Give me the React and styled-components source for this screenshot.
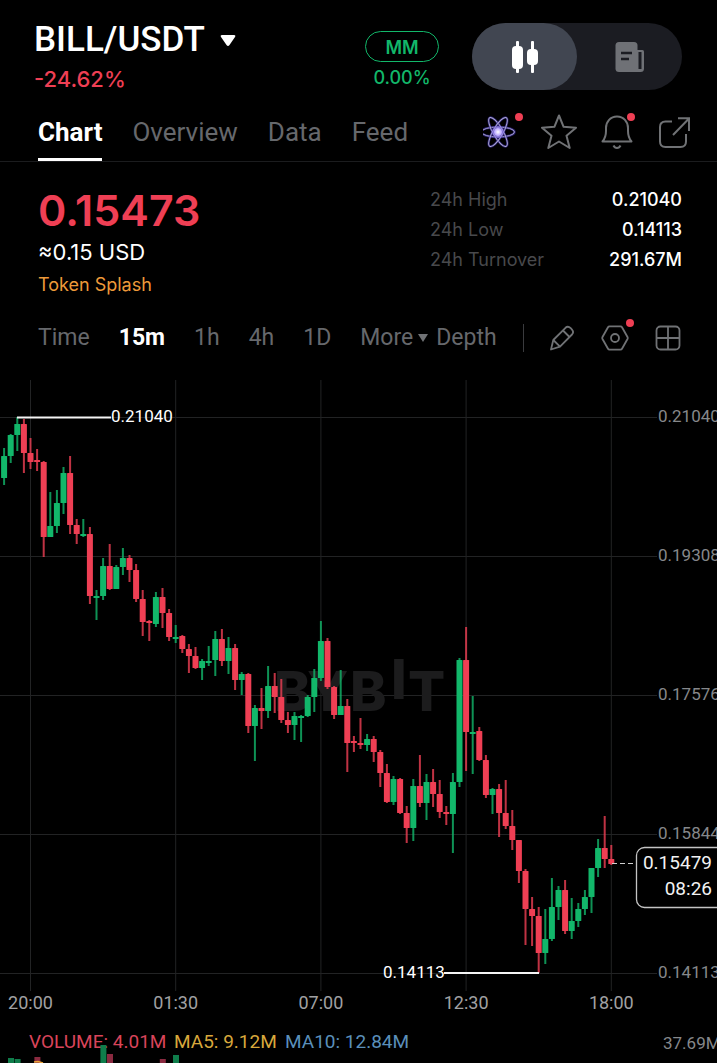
import React, { useState } from 'react'
import styled, { createGlobalStyle } from 'styled-components'

const GREEN = '#12b76a'
const RED = '#ef3f54'
const GREY = '#66686c'

// one entry per 15m candle: side, high, body top, body bottom, low (chart units)
const CANDLES = [
    ['g', 448, 456, 478, 485], ['g', 434, 435, 456, 463], ['g', 417, 424, 435, 451], ['r', 419, 424, 453, 473],
    ['r', 438, 453, 462, 469], ['r', 449, 460, 462, 471], ['r', 461, 462, 537, 557], ['g', 492, 526, 537, 537],
    ['g', 490, 503, 526, 533], ['g', 467, 473, 503, 514], ['r', 456, 473, 525, 534], ['r', 519, 525, 534, 544],
    ['g', 519, 534, 536, 537], ['r', 527, 534, 596, 604], ['g', 590, 596, 598, 620], ['g', 558, 566, 596, 600],
    ['r', 544, 566, 589, 590], ['g', 565, 567, 589, 589], ['g', 548, 558, 567, 575], ['r', 555, 558, 570, 582],
    ['r', 564, 570, 599, 602], ['r', 590, 599, 622, 636], ['r', 620, 621, 623, 641], ['g', 592, 597, 624, 627],
    ['r', 588, 597, 613, 628], ['r', 609, 613, 637, 641], ['g', 625, 637, 639, 643], ['r', 635, 636, 649, 653],
    ['r', 644, 649, 656, 673], ['r', 647, 656, 668, 669], ['g', 659, 661, 668, 680], ['g', 646, 661, 663, 666],
    ['g', 631, 639, 660, 676], ['r', 629, 639, 661, 666], ['g', 637, 648, 661, 674], ['r', 644, 648, 680, 690],
    ['g', 672, 674, 680, 695], ['r', 673, 674, 726, 733], ['g', 705, 708, 726, 761], ['r', 688, 708, 711, 729],
    ['g', 666, 686, 711, 718], ['r', 673, 686, 697, 713], ['r', 679, 697, 720, 723], ['r', 712, 720, 725, 733],
    ['g', 712, 716, 725, 740], ['g', 715, 716, 718, 742], ['g', 695, 697, 716, 717], ['g', 669, 678, 697, 712],
    ['g', 621, 641, 678, 681], ['r', 638, 641, 687, 689], ['r', 686, 687, 715, 719], ['g', 670, 706, 715, 715],
    ['r', 699, 706, 743, 772], ['r', 736, 741, 743, 752], ['r', 718, 743, 745, 749], ['g', 734, 739, 745, 751],
    ['r', 736, 739, 752, 762], ['r', 750, 752, 773, 787], ['r', 764, 773, 802, 803], ['g', 776, 779, 802, 805],
    ['r', 778, 779, 813, 814], ['r', 806, 813, 828, 843], ['g', 779, 786, 828, 841], ['r', 755, 786, 803, 807],
    ['g', 774, 782, 803, 820], ['r', 769, 782, 794, 807], ['r', 780, 794, 812, 818], ['r', 806, 812, 814, 825],
    ['g', 773, 782, 814, 853], ['g', 658, 660, 782, 787], ['r', 627, 660, 732, 771], ['g', 696, 732, 734, 774],
    ['r', 727, 731, 760, 761], ['r', 755, 760, 795, 798], ['g', 788, 789, 795, 814], ['r', 784, 789, 813, 837],
    ['r', 780, 813, 826, 829], ['r', 810, 826, 840, 850], ['r', 840, 840, 871, 883], ['r', 869, 871, 909, 945],
    ['r', 897, 909, 916, 946], ['r', 907, 916, 953, 973], ['g', 909, 939, 953, 964], ['g', 878, 907, 939, 941],
    ['g', 886, 890, 907, 920], ['r', 880, 890, 931, 934], ['g', 898, 921, 931, 939], ['g', 903, 909, 921, 927],
    ['g', 890, 897, 909, 915], ['g', 868, 868, 897, 913], ['g', 839, 848, 868, 877], ['r', 816, 848, 859, 868],
    ['r', 845, 859, 864, 865],
]

const PRICES = [[417, '0.21040'], [556, '0.19308'], [695, '0.17576'], [834, '0.15844'], [973, '0.14113']]
const TIMES = [[30.5, '20:00'], [175.7, '01:30'], [320.9, '07:00'], [466.1, '12:30'], [611.3, '18:00']]
const VOLUMES = [[8, 1058, 'g'], [14.6, 1059, 'g'], [34.4, 1057, 'r'], [100.4, 1045, 'g'], [107, 1054, 'r'], [159.8, 1059, 'r'], [173, 1055, 'g']]

const STATS = [['24h High', '0.21040'], ['24h Low', '0.14113'], ['24h Turnover', '291.67M']]

const candleX = (i) => 4.1 + i * 6.6

const PriceChart = () => (
    <ChartSvg viewBox="0 377 717 686" role="img" aria-label="BILL/USDT 15m chart">
        <g stroke="#222324" strokeWidth="1">
            {PRICES.map(([y]) => <line key={y} x1="0" x2="657" y1={y + 0.5} y2={y + 0.5} />)}
            {TIMES.map(([x]) => <line key={x} x1={x} x2={x} y1="380" y2="991" />)}
        </g>

        <text fontFamily="Inter, sans-serif" fontWeight="800" fontSize="55" fill="#1c1c1d">
            <tspan x="274" y="711">B</tspan>
            <tspan x="307" y="711">Y</tspan>
            <tspan x="350" y="711">B</tspan>
            <tspan x="391" y="699">I</tspan>
            <tspan x="408" y="711">T</tspan>
        </text>

        {CANDLES.map(([side, high, top, bottom, low], i) => (
            <g key={i} fill={side === 'g' ? GREEN : RED}>
                <rect x={candleX(i) - 1} y={high} width="2" height={low - high} opacity="0.8" />
                <rect x={candleX(i) - 3} y={top} width="6" height={bottom - top} rx="0.6" />
            </g>
        ))}

        <g stroke="#f4f4f4" fill="none">
            <path d="M17 417.5H111M444 973H539" strokeWidth="2" />
            <path d="M612 863.5H636" strokeDasharray="5 3" strokeWidth="1.2" stroke="#cfcfcf" />
        </g>
        <g fontFamily="Roboto, sans-serif" fontSize="17">
            <g fill="#fff">
                <text x="111" y="422">0.21040</text>
                <text x="383" y="978">0.14113</text>
            </g>
            <g fill="#86888b">
                {PRICES.map(([y, label]) => <text key={y} x="658" y={y + 5}>{label}</text>)}
                <text x="663" y="1049">37.69M</text>
            </g>
        </g>
        <g fontFamily="Roboto, sans-serif" fontSize="18" fill="#a0a1a3" textAnchor="middle">
            {TIMES.map(([x, label]) => <text key={x} x={x} y="1009">{label}</text>)}
        </g>

        <rect x="636.5" y="847.5" width="100" height="60" rx="8" fill="#000" stroke="#c4c4c4" strokeWidth="1.3" />
        <g fontFamily="Roboto, sans-serif" fontSize="19" fill="#f2f2f2" textAnchor="end">
            <text x="712" y="869">0.15479</text>
            <text x="712" y="895">08:26</text>
        </g>

        <g fontFamily="Roboto, sans-serif" fontSize="19">
            <text x="29" y="1048" fill="#d9445a">VOLUME: 4.01M</text>
            <text x="174" y="1048" fill="#d8a83c">MA5: 9.12M</text>
            <text x="285" y="1048" fill="#5a8fba">MA10: 12.84M</text>
        </g>
        {VOLUMES.map(([x, y, side]) => (
            <rect key={x} x={x} y={y} width="6" height={1063 - y} fill={side === 'g' ? '#0f7d4b' : '#8a2a40'} />
        ))}
        <path d="M34 1062L38 1061.5L43 1063" stroke="#e8a33a" strokeWidth="1.6" fill="none" />
    </ChartSvg>
)

const AtomIcon = () => (
    <svg width="36" height="36" viewBox="0 0 36 36" fill="none">
        <defs>
            <radialGradient id="core">
                <stop offset="0" stopColor="#fff" />
                <stop offset="0.5" stopColor="#b9a8ff" />
                <stop offset="1" stopColor="#5b45d6" stopOpacity="0" />
            </radialGradient>
        </defs>
        {[0, 60, 120].map((deg) => (
            <g key={deg} transform={`rotate(${deg} 15 18)`}>
                <ellipse cx="15" cy="18" rx="16.5" ry="5" stroke="#3d2fa8" strokeWidth="2.4" opacity="0.7" />
                <ellipse cx="15" cy="18" rx="16.5" ry="5" stroke="#b4b0cf" strokeWidth="0.9" />
            </g>
        ))}
        <circle cx="15" cy="18" r="7" fill="url(#core)" />
    </svg>
)

const StarIcon = () => (
    <svg width="36" height="36" viewBox="0 0 36 36" fill="none" stroke="#707275" strokeWidth="2" strokeLinejoin="round">
        <path d="M18 1.5L22.6 12.8L35 13.7L25.5 21.7L28.7 34L18 27.5L7.3 34L10.5 21.7L1 13.7L13.4 12.8Z" />
    </svg>
)

const BellIcon = () => (
    <svg width="36" height="36" viewBox="0 0 36 36" fill="none" stroke="#707275" strokeWidth="2" strokeLinejoin="round">
        <path d="M3.5 27.5C6 24.5 7 21.5 7 17V14C7 7.5 11.5 2.5 18 2.5S29 7.5 29 14V17C29 21.5 30 24.5 32.5 27.5Z" />
        <path d="M14.5 31.5C16 34.8 20 34.8 21.5 31.5" />
    </svg>
)

const ShareIcon = () => (
    <svg width="36" height="36" viewBox="0 0 36 36" fill="none" stroke="#707275" strokeWidth="2">
        <path d="M15 7.5H8.5Q3 7.5 3 13V27.5Q3 33 8.5 33H23.5Q29 33 29 27.5V20" />
        <path d="M16 21L32 4.5M21 4.3H32V17" />
    </svg>
)

const PencilIcon = () => (
    <svg width="28" height="28" viewBox="0 0 28 28" fill="none" stroke="#707275" strokeWidth="1.8" strokeLinejoin="round">
        <path d="M3 25.5L5.3 16L17.5 3.8Q20 1.6 22.7 4.2L23.8 5.3Q26.3 8 24 10.5L12 22.7Z" />
        <path d="M15 6.5L21.5 13M5.3 16L12 22.7" />
    </svg>
)

const SettingIcon = () => (
    <svg width="28" height="28" viewBox="0 0 28 28" fill="none" stroke="#707275" strokeWidth="1.8" strokeLinejoin="round">
        <path d="M8.5 2.3H19.5Q20.5 2.3 21 3.2L26.5 13Q27 14 26.5 15L21 24.8Q20.5 25.7 19.5 25.7H8.5Q7.5 25.7 7 24.8L1.5 15Q1 14 1.5 13L7 3.2Q7.5 2.3 8.5 2.3Z" />
        <circle cx="14" cy="14" r="4" />
    </svg>
)

const LayoutIcon = () => (
    <svg width="28" height="28" viewBox="0 0 28 28" fill="none" stroke="#707275" strokeWidth="1.8">
        <rect x="2.5" y="2.5" width="23" height="23" rx="4" />
        <path d="M14 2.5V25.5M2.5 14H25.5" />
    </svg>
)

const App = () => {
    const [tab, setTab] = useState('Chart')
    const [interval, setChartInterval] = useState('15m')

    return (
        <Page>
            <GlobalStyle />
            <Header>
                <div>
                    <PairButton>
                        BILL/USDT
                        <svg width="16" height="13" viewBox="0 0 16 13"><path d="M2 1H14Q16 1 15 3L9.5 11Q8 13 6.5 11L1 3Q0 1 2 1Z" fill="#fff" /></svg>
                    </PairButton>
                    <Change>-24.62%</Change>
                </div>
                <HeaderRight>
                    <Maker>
                        <MakerTag>MM</MakerTag>
                        <span>0.00%</span>
                    </Maker>
                    <Switcher>
                        <SwitchButton $active aria-label="Chart view">
                            <svg width="28" height="34" viewBox="0 0 28 34" fill="#fff">
                                <rect x="5" y="1" width="3" height="32" rx="1" />
                                <rect x="1" y="6" width="11" height="23" rx="4" />
                                <rect x="20" y="1" width="3" height="32" rx="1" />
                                <rect x="16" y="9" width="11" height="16" rx="4" />
                            </svg>
                        </SwitchButton>
                        <SwitchButton aria-label="Trade view">
                            <svg width="32" height="32" viewBox="0 0 32 32">
                                <path d="M5 1H20Q23.5 1 23.5 4.5V31H5Q1.5 31 1.5 27.5V4.500Q1.5 1 5 1Z" fill="#6f7176" />
                                <path d="M22 9H28.5Q30 9 30 10.5V27.5Q30 31 26.5 31H22" fill="#6f7176" />
                                <rect x="24.5" y="11" width="3" height="17" fill="#1b1c22" />
                                <path d="M7 12H18M7 18H15" stroke="#1b1c22" strokeWidth="2.5" />
                            </svg>
                        </SwitchButton>
                    </Switcher>
                </HeaderRight>
            </Header>

            <TabBar>
                <Tabs>
                    {['Chart', 'Overview', 'Data', 'Feed'].map((name) => (
                        <Tab key={name} $active={name === tab} onClick={() => setTab(name)}>{name}</Tab>
                    ))}
                </Tabs>
                <TabIcons>
                    <IconButton aria-label="Insights"><AtomIcon /><Dot $top={-1} $right={-4} /></IconButton>
                    <IconButton aria-label="Favourite"><StarIcon /></IconButton>
                    <IconButton aria-label="Alerts"><BellIcon /><Dot $top={-1} $right={0} /></IconButton>
                    <IconButton aria-label="Share"><ShareIcon /></IconButton>
                </TabIcons>
            </TabBar>

            <Summary>
                <div>
                    <Price>0.15473</Price>
                    <Fiat>≈0.15 USD</Fiat>
                    <Splash href="#splash">Token Splash</Splash>
                </div>
                <Stats>
                    {STATS.map(([label, value]) => (
                        <StatRow key={label}>
                            <dt>{label}</dt>
                            <dd>{value}</dd>
                        </StatRow>
                    ))}
                </Stats>
            </Summary>

            <Toolbar>
                <Intervals>
                    {['Time', '15m', '1h', '4h', '1D'].map((name) => (
                        <Interval key={name} $active={name === interval} onClick={() => setChartInterval(name)}>{name}</Interval>
                    ))}
                    <MoreGroup>
                        <Interval>
                            More
                            <svg width="10" height="8" viewBox="0 0 10 8"><path d="M0 0H10L5 8Z" fill="#707275" /></svg>
                        </Interval>
                        <Interval>Depth</Interval>
                    </MoreGroup>
                </Intervals>
                <Divider />
                <Tools>
                    <IconButton aria-label="Draw"><PencilIcon /></IconButton>
                    <IconButton aria-label="Settings"><SettingIcon /><Dot $top={-5} $right={-5} /></IconButton>
                    <IconButton aria-label="Layout"><LayoutIcon /></IconButton>
                </Tools>
            </Toolbar>

            <PriceChart />
        </Page>
    )
}

export default App


const GlobalStyle = createGlobalStyle`
*{
    box-sizing:border-box;
}
body{
    margin:0;
    background:#000;
}
button{
    padding:0;
    border:none;
    background:none;
    color:inherit;
    font:inherit;
    cursor:pointer;
}
`

const Page = styled.div`
background:#000;
color:#fff;
font-family:Inter, sans-serif;
overflow:hidden;
`

const Header = styled.header`
display:flex;
justify-content:space-between;
padding:20px 35px 0 34px;
height:98px;
`

const PairButton = styled.button`
&&{
    display:flex;
    align-items:center;
    gap:15px;
    font-family:Roboto, sans-serif;
    font-size:35px;
    font-weight:500;
    line-height:40px;
}
`

const Change = styled.div`
color:${RED};
font-size:22px;
font-weight:500;
line-height:38px;
`

const HeaderRight = styled.div`
display:flex;
gap:33px;
`

const Maker = styled.div`
display:flex;
flex-direction:column;
align-items:center;
padding-top:11px;
color:${GREEN};
font-size:18px;
font-weight:500;
line-height:32px;
`

const MakerTag = styled.span`
width:74px;
height:31px;
border:1px solid ${GREEN};
border-radius:16px;
text-align:center;
font-weight:600;
line-height:32px;
`

const Switcher = styled.div`
display:flex;
width:210px;
height:67px;
margin-top:3px;
border-radius:34px;
background:#1b1c22;
`

const SwitchButton = styled.button`
display:flex;
flex:1;
align-items:center;
justify-content:center;
border-radius:34px;
&&{
    background:${(props) => (props.$active ? '#414651' : 'none')};
}
`

const TabBar = styled.nav`
display:flex;
justify-content:space-between;
align-items:flex-end;
height:64px;
padding:0 24px 0 38px;
border-bottom:1px solid #1b1c1e;
`

const Tabs = styled.div`
display:flex;
gap:30px;
`

const Tab = styled.button`
&&{
    border-bottom:3px solid ${(props) => (props.$active ? '#fff' : 'transparent')};
    color:${(props) => (props.$active ? '#fff' : GREY)};
    font-family:Roboto, sans-serif;
    font-size:26px;
    font-weight:${(props) => (props.$active ? 700 : 400)};
    line-height:52px;
}
`

const TabIcons = styled.div`
display:flex;
gap:22px;
padding-bottom:11px;
`

const IconButton = styled.button`
position:relative;
display:flex;
`

const Dot = styled.span`
position:absolute;
top:${(props) => props.$top}px;
right:${(props) => props.$right}px;
width:8px;
height:8px;
border-radius:50%;
background:${RED};
`

const Summary = styled.section`
display:flex;
justify-content:space-between;
padding:24px 35px 0 38px;
`

const Price = styled.div`
color:${RED};
font-size:43px;
font-weight:600;
line-height:48px;
`

const Fiat = styled.div`
font-size:22px;
line-height:36px;
`

const Splash = styled.a`
display:block;
color:#ee9a3a;
font-size:18px;
line-height:29px;
text-decoration:none;
`

const Stats = styled.dl`
width:252px;
margin:-1px 0 0;
`

const StatRow = styled.div`
display:flex;
justify-content:space-between;
font-size:18px;
line-height:30px;
>dt{
    color:#48494c;
}
>dd{
    margin:0;
    font-weight:500;
}
`

const Toolbar = styled.div`
display:flex;
align-items:center;
height:78px;
padding:0 35px 0 38px;
`

const Intervals = styled.div`
display:flex;
gap:29px;
`

const Interval = styled.button`
&&{
    display:flex;
    align-items:center;
    gap:5px;
    color:${(props) => (props.$active ? '#fff' : GREY)};
    font-family:Roboto, sans-serif;
    font-size:23px;
    font-weight:${(props) => (props.$active ? 700 : 400)};
    line-height:32px;
}
`

const MoreGroup = styled.div`
display:flex;
gap:8px;
`

const Divider = styled.span`
width:1px;
height:28px;
margin-left:auto;
background:#3a3b3e;
`

const Tools = styled.div`
display:flex;
gap:25px;
margin-left:24px;
`

const ChartSvg = styled.svg`
display:block;
width:100%;
height:auto;
`
